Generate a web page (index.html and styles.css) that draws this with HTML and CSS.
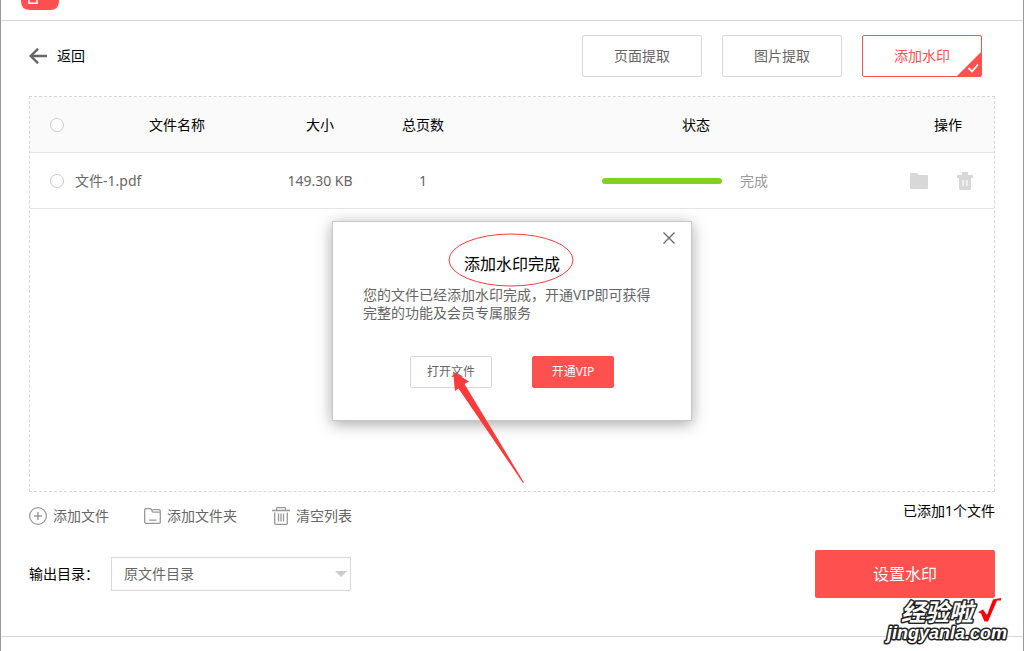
FILE: index.html
```html
<!DOCTYPE html>
<html lang="zh-CN">
<head>
<meta charset="utf-8">
<title>添加水印</title>
<link rel="stylesheet" href="styles.css">
</head>
<body class="window">
<header class="titlebar">
  <svg class="logo" width="38" height="10" viewBox="0 0 38 10" aria-hidden="true">
    <path d="M0 0H38V1Q38 10 29 10H9Q0 10 0 1Z" fill="#ff5050"/>
    <path d="M8 0V3.300H16V0" fill="none" stroke="#fff" stroke-width="1.500"/>
  </svg>
</header>
<main class="content">
  <div class="toolbar">
    <button class="back" type="button">
      <svg width="18" height="16" viewBox="0 0 18 16" fill="none" stroke="#666" stroke-width="2.400" aria-hidden="true"><path d="M9 .8L1.700 8L9 15.200M1.700 8H18"/></svg>
      返回
    </button>
    <nav class="tabs">
      <button class="tab" type="button">页面提取</button>
      <button class="tab" type="button">图片提取</button>
      <button class="tab tab-active" type="button">添加水印
        <svg class="tab-mark" width="24" height="24" viewBox="0 0 24 24" aria-hidden="true"><path d="M24 0V24H0Z" fill="#ff5050"/><path d="M11.500 16L15 19.500L21 12.500" fill="none" stroke="#fff" stroke-width="1.800"/></svg>
      </button>
    </nav>
  </div>

  <section class="panel">
    <table class="files">
      <colgroup><col class="c-check"><col class="c-name"><col class="c-size"><col class="c-pages"><col><col class="c-ops"></colgroup>
      <thead>
        <tr>
          <th><input class="pick" type="checkbox" aria-label="全选"></th>
          <th>文件名称</th><th>大小</th><th>总页数</th><th>状态</th><th class="ops-head">操作</th>
        </tr>
      </thead>
      <tbody>
        <tr>
          <td><input class="pick" type="checkbox" aria-label="文件-1.pdf"></td>
          <td class="name">文件-1.pdf</td>
          <td>149.30 KB</td>
          <td>1</td>
          <td><div class="status"><span class="bar"></span><span>完成</span></div></td>
          <td>
            <div class="ops">
              <button class="icon-btn" type="button" aria-label="打开文件夹">
                <svg width="18" height="16" viewBox="0 0 18 16" fill="#d8d8d8"><path d="M1 0H7L9 2H17Q18 2 18 3V15Q18 16 17 16H1Q0 16 0 15V1Q0 0 1 0Z"/></svg>
              </button>
              <button class="icon-btn" type="button" aria-label="删除">
                <svg width="16" height="18" viewBox="0 0 16 18" fill="#d8d8d8"><path fill-rule="evenodd" d="M5 1Q5 0 6 0H10Q11 0 11 1V3H15.500Q16 3 16 3.500V6H14V16.500Q14 18 12.500 18H3.500Q2 18 2 16.500V6H0V3.500Q0 3 .5 3H5ZM5.500 8V14H6.700V8ZM9.300 8V14H10.500V8Z"/></svg>
              </button>
            </div>
          </td>
        </tr>
      </tbody>
    </table>

    <div class="dialog" role="dialog" aria-labelledby="dialog-title">
      <button class="close" type="button" aria-label="关闭">
        <svg width="12" height="12" viewBox="0 0 12 12" fill="none" stroke="#666" stroke-width="1.300"><path d="M.5 .5L11.500 11.500M11.500 .5L.5 11.500"/></svg>
      </button>
      <h1 class="dialog-title" id="dialog-title">添加水印完成</h1>
      <p class="dialog-text">您的文件已经添加水印完成，开通VIP即可获得完整的功能及会员专属服务</p>
      <div class="dialog-actions">
        <button class="btn" type="button">打开文件</button>
        <button class="btn btn-red" type="button">开通VIP</button>
      </div>
      <svg class="notes" width="360" height="264" viewBox="0 0 360 264" aria-hidden="true">
        <ellipse cx="179" cy="39" rx="62" ry="26" fill="none" stroke="#fb3b3b" stroke-width="1"/>
        <path d="M121 150.500L137 160.500L132.500 163L192 261.500L191 262L126.500 167.500L123 170Z" fill="#fb3b3b"/>
      </svg>
    </div>
  </section>

  <div class="list-tools">
    <div class="links">
      <button class="link" type="button">
        <svg width="18" height="18" viewBox="0 0 18 18" fill="none" stroke="#999"><circle cx="9" cy="9" r="8.400" stroke-width="1.200"/><path d="M9 5V13M5 9H13" stroke-width="1.400"/></svg>
        添加文件
      </button>
      <button class="link" type="button">
        <svg width="17" height="16" viewBox="0 0 17 16" fill="none" stroke="#999" stroke-width="1.300"><path d="M1.700 .7H6.300Q7 .7 7.300 1.400L8.300 3.500Q8.600 4.200 9.300 4.200H16.300V14.300Q16.300 15.300 15.300 15.300H1.700Q.7 15.300 .7 14.300V1.700Q.7 .7 1.700 .7ZM8.500 1.700H15.300Q16.300 1.700 16.300 2.700V5M5 12.200H12.500"/></svg>
        添加文件夹
      </button>
      <button class="link" type="button">
        <svg width="18" height="18" viewBox="0 0 18 18" fill="none" stroke="#999" stroke-width="1.300"><path d="M0 3.500H18M4.500 3V1.500Q4.500 .7 5.300 .7H12.700Q13.500 .7 13.500 1.500V3M2.700 5.500V16.300Q2.700 17.300 3.700 17.300H14.300Q15.300 17.300 15.300 16.300V5.500M6.500 6.500V14.500M9 6.500V14.500M11.500 6.500V14.500"/></svg>
        清空列表
      </button>
    </div>
    <span class="count">已添加1个文件</span>
  </div>

  <div class="output">
    <label class="output-label" for="dir">输出目录：</label>
    <div class="select-box">
      <select class="select" id="dir"><option>原文件目录</option></select>
      <svg class="caret" width="12" height="6" viewBox="0 0 12 6" aria-hidden="true"><path d="M0 0H12L6 6Z" fill="#ccc"/></svg>
    </div>
    <button class="submit" type="button">设置水印</button>
  </div>
</main>
<footer class="footer"></footer>

<svg class="stamp" width="128" height="52" viewBox="0 0 128 52" aria-label="经验啦 jingyanla.com">
  <text class="stamp-name" x="18" y="25">经验啦</text>
  <path d="M95 16L100 13.500L104 19L110 3.500L118 2V4.500H114L105 25.500H101.500L98 17.500Z" fill="#f00"/>
  <text class="stamp-site" x="4" y="43">jingyanla.com</text>
</svg>
</body>
</html>
```

FILE: styles.css
```css
* {
  box-sizing: border-box;
}

.window {
  position: relative;
  display: flex;
  flex-direction: column;
  min-height: 100vh;
  margin: 0;
  border: solid #999;
  border-width: 0 1px;
  background: #fff;
  color: #000;
  font-family: "Noto Sans", "Noto Sans CJK SC", sans-serif;
  font-size: 14px;
  line-height: 20px;
}

button,
select {
  margin: 0;
  padding: 0;
  border: 0;
  background: none;
  color: #666;
  font: inherit;
}

svg {
  display: block;
}

.titlebar {
  height: 21px;
  padding-left: 20px;
  border-bottom: 1px solid #d8d8d8;
}

.content {
  display: flex;
  flex: 1;
  flex-direction: column;
  padding: 14px 28px 38px;
}

.toolbar {
  display: flex;
  align-items: center;
  justify-content: space-between;
  padding-right: 13px;
}

.back {
  display: flex;
  align-items: center;
  gap: 10px;
  color: #000;
}

.tabs {
  display: flex;
  gap: 20px;
}

.tab {
  position: relative;
  width: 120px;
  height: 42px;
  border: 1px solid #d8d8d8;
  border-radius: 2px;
}

.tab-active {
  border-color: #ff5050;
  color: #ff5050;
}

.tab-mark {
  position: absolute;
  right: 0;
  bottom: 0;
}

.panel {
  position: relative;
  flex: 1;
  margin-top: 19px;
  border: 1px dashed #d8d8d8;
}

.files {
  width: 100%;
  border-spacing: 0;
  table-layout: fixed;
  color: #666;
  text-align: center;
}

.files th,
.files td {
  height: 56px;
  padding: 0;
  border-bottom: 1px solid #e4e4e4;
  font-weight: 400;
}

.files th {
  background: #fafafa;
  color: #000;
}

.c-check { width: 45px; }
.c-name { width: 204px; }
.c-size { width: 82px; }
.c-pages { width: 124px; }
.c-ops { width: 87px; }

.files .name {
  text-align: left;
}

.files .ops-head {
  padding-right: 5px;
}

.pick {
  display: block;
  width: 14px;
  height: 14px;
  margin: 0 0 0 20px;
  border: 1px solid #ccc;
  border-radius: 50%;
  appearance: none;
  background: #fff;
}

.status {
  display: flex;
  align-items: center;
  justify-content: center;
  gap: 18px;
  padding-right: 22px;
  color: #999;
}

.bar {
  width: 120px;
  height: 6px;
  border-radius: 3px;
  background: #7ed321;
}

.ops {
  display: flex;
  align-items: center;
  gap: 29px;
  padding-left: 3px;
}

.dialog {
  position: absolute;
  top: 124px;
  left: 50%;
  width: 360px;
  padding: 32px 30px;
  border: 1px solid #c8c8c8;
  background: #fff;
  box-shadow: 0 3px 14px rgba(0, 0, 0, 0.35);
  transform: translateX(-50%);
}

.close {
  position: absolute;
  top: 10px;
  right: 16px;
}

.dialog-title {
  margin: 0;
  font-size: 16px;
  font-weight: 400;
  line-height: 20px;
  text-align: center;
}

.dialog-text {
  margin: 12px 0 34px;
  color: #666;
  line-height: 18px;
}

.dialog-actions {
  display: flex;
  justify-content: center;
  gap: 40px;
}

.btn {
  width: 82px;
  height: 32px;
  border: 1px solid #d8d8d8;
  border-radius: 2px;
  font-size: 12px;
}

.btn-red {
  border-color: #ff5050;
  background: #ff5050;
  color: #fff;
}

.notes {
  position: absolute;
  top: -1px;
  left: -1px;
  pointer-events: none;
}

.list-tools {
  display: flex;
  align-items: flex-start;
  justify-content: space-between;
  padding-top: 9px;
}

.links {
  display: flex;
  gap: 35px;
  padding-top: 5px;
}

.link {
  display: flex;
  align-items: center;
  gap: 6px;
}

.output {
  display: flex;
  align-items: center;
  margin-top: 24px;
}

.output-label {
  width: 82px;
}

.select-box {
  position: relative;
}

.select {
  width: 240px;
  height: 34px;
  padding: 0 12px;
  border: 1px solid #d8d8d8;
  appearance: none;
  background: #fff;
}

.caret {
  position: absolute;
  top: 14px;
  right: 4px;
  pointer-events: none;
}

.submit {
  width: 180px;
  height: 48px;
  margin-left: auto;
  border-radius: 2px;
  background: #ff5050;
  color: #fff;
  font-size: 16px;
}

.footer {
  height: 15px;
  border-top: 1px solid #d8d8d8;
}

.stamp {
  position: absolute;
  right: 12px;
  bottom: 3px;
  overflow: visible;
}

.stamp-name,
.stamp-site {
  fill: #fff;
  stroke: #222;
  stroke-width: 3px;
  stroke-linejoin: round;
  paint-order: stroke;
  font-weight: 700;
  font-style: italic;
}

.stamp-name {
  font-family: "Noto Sans CJK SC", sans-serif;
  font-size: 24px;
}

.stamp-site {
  font-family: "Liberation Sans", sans-serif;
  font-size: 18px;
}
```
